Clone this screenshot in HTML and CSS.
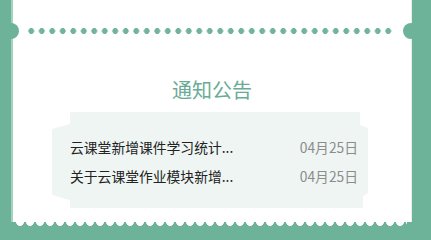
FILE: index.html
```html
<!DOCTYPE html>
<html lang="zh-CN">
<head>
<meta charset="utf-8">
<title>通知公告</title>
<link rel="stylesheet" href="styles.css">
</head>
<body>
<div class="page">
  <section class="card">
    <div class="perforation">
      <div class="dots"></div>
    </div>
    <h2 class="title">通知公告</h2>
    <div class="notice-box">
      <ul class="notice-list">
        <li class="notice-item"><span class="notice-text">云课堂新增课件学习统计...</span><span class="notice-date">04月25日</span></li>
        <li class="notice-item"><span class="notice-text">关于云课堂作业模块新增...</span><span class="notice-date">04月25日</span></li>
      </ul>
    </div>
  </section>
</div>
</body>
</html>
```
FILE: styles.css
```css
html, body {
  margin: 0;
  padding: 0;
}
body {
  width: 431px;
  height: 236px;
  overflow: hidden;
  background: #6db39a;
  font-family: "Noto Sans CJK SC", "Noto Sans", sans-serif;
}
.page {
  display: flex;
  padding-left: 11px;
}
.card {
  position: relative;
  width: 400px;
  height: 222px;
  background: #ffffff;
  border-left: 2px solid #a3d2c0;
  box-sizing: border-box;
  box-shadow: 1px 0 0 #e8eeec;
}
.card::after {
  content: "";
  position: absolute;
  left: 2px;
  right: 4px;
  bottom: -4px;
  height: 4px;
  background: radial-gradient(circle at 50% 0, #ffffff 3.6px, transparent 4.2px) 0 0 / 10px 8px repeat-x;
}
.perforation {
  position: relative;
  height: 6px;
  margin-top: 28px;
}
.perforation::before,
.perforation::after {
  content: "";
  position: absolute;
  top: -5px;
  width: 16px;
  height: 16px;
  border-radius: 50%;
  background: #6db39a;
}
.perforation::before {
  left: -10px;
}
.perforation::after {
  right: -8px;
}
.dots {
  margin-left: 13px;
  width: 367.5px;
  height: 6px;
  background: radial-gradient(circle, #72b39d 2.7px, transparent 3.2px) 0 0 / 10.5px 6px repeat-x;
}
.title {
  margin: 42px 0 0;
  text-align: center;
  font-size: 20px;
  line-height: 28px;
  font-weight: 400;
  color: #6aab95;
}
.notice-box {
  margin: 8px 0 0 39px;
  width: 316px;
  height: 96px;
  box-sizing: border-box;
  padding: 20px 10px 0 18px;
  background: #eef5f3;
  clip-path: polygon(18px 0, calc(100% - 8px) 0, calc(100% - 8px) 13px, 100% 16px, 100% calc(100% - 15px), calc(100% - 5px) calc(100% - 12px), calc(100% - 5px) 100%, 18px 100%, 18px calc(100% - 8px), 0 calc(100% - 13px), 0 17px, 18px 12px);
}
.notice-list {
  list-style: none;
  margin: 0;
  padding: 0;
}
.notice-item {
  display: flex;
  justify-content: space-between;
  align-items: center;
  height: 29px;
  font-size: 13.8px;
}
.notice-text {
  color: #222222;
}
.notice-date {
  color: #8c8c8c;
}
```
